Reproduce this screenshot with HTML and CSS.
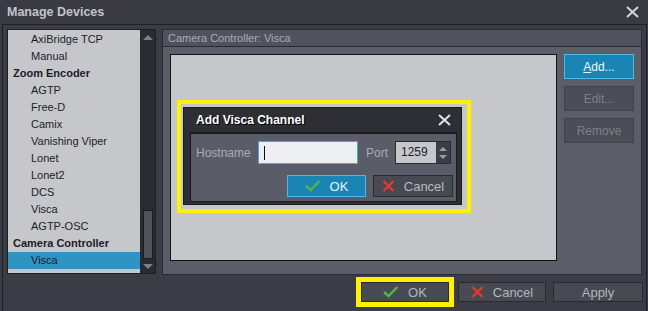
FILE: index.html
```html
<!DOCTYPE html>
<html lang="en">
<head>
    <meta charset="UTF-8">
    <title>Manage Devices</title>
    <link rel="stylesheet" href="styles.css">
</head>
<body>
    <div class="titlebar">
        <span class="title">Manage Devices</span>
        <svg class="close" width="13" height="12" viewBox="0 0 13 12">
            <path d="M1 1 L12 11 M12 1 L1 11" stroke="#d4d5d9" stroke-width="2"/>
        </svg>
    </div>

    <div class="frame">
        <div class="main">
            <div class="devlist">
                <ul class="items">
                    <li class="item">AxiBridge TCP</li>
                    <li class="item">Manual</li>
                    <li class="cat">Zoom Encoder</li>
                    <li class="item">AGTP</li>
                    <li class="item">Free-D</li>
                    <li class="item">Camix</li>
                    <li class="item">Vanishing Viper</li>
                    <li class="item">Lonet</li>
                    <li class="item">Lonet2</li>
                    <li class="item">DCS</li>
                    <li class="item">Visca</li>
                    <li class="item">AGTP-OSC</li>
                    <li class="cat">Camera Controller</li>
                    <li class="item selected">Visca</li>
                </ul>
                <div class="scrollbar">
                    <span class="arrow up"></span>
                    <div class="track"><div class="thumb"></div></div>
                    <span class="arrow down"></span>
                </div>
            </div>

            <div class="group">
                <div class="group-head">Camera Controller: Visca</div>
                <div class="group-body">
                    <div class="canvas">
                        <div class="highlight">
                            <div class="dialog">
                                <div class="dialog-head">
                                    <span>Add Visca Channel</span>
                                    <svg width="13" height="12" viewBox="0 0 13 12">
                                        <path d="M1 1 L12 11 M12 1 L1 11" stroke="#e2e3e6" stroke-width="2"/>
                                    </svg>
                                </div>
                                <div class="dialog-body">
                                    <div class="row">
                                        <span class="label">Hostname</span>
                                        <div class="input"><span class="caret"></span></div>
                                        <span class="label port">Port</span>
                                        <div class="spin">
                                            <span class="spin-value">1259</span>
                                            <span class="spin-btns">
                                                <svg width="10" height="16" viewBox="0 0 10 16">
                                                    <path d="M1 6 L5 2 L9 6 Z M1 10 L5 14 L9 10 Z" fill="#9a9da5"/>
                                                </svg>
                                            </span>
                                        </div>
                                    </div>
                                    <div class="row actions">
                                        <button class="btn blue">
                                            <svg class="ico" width="16" height="12" viewBox="0 0 16 12">
                                                <path d="M1 6 L5.5 10 L14.5 1" fill="none" stroke="#4fb548" stroke-width="2.4"/>
                                            </svg>OK</button>
                                        <button class="btn dark">
                                            <svg class="ico" width="13" height="12" viewBox="0 0 13 12">
                                                <path d="M1.5 1 L11.5 11 M11.5 1 L1.5 11" stroke="#e8372c" stroke-width="2.4"/>
                                            </svg>Cancel</button>
                                    </div>
                                </div>
                            </div>
                        </div>
                    </div>
                    <div class="side">
                        <button class="sbtn blue"><u>A</u>dd...</button>
                        <button class="sbtn off">Edit...</button>
                        <button class="sbtn off">Remove</button>
                    </div>
                </div>
            </div>
        </div>

        <div class="footer">
            <button class="fbtn marked">
                <svg class="ico" width="16" height="12" viewBox="0 0 16 12">
                    <path d="M1 6 L5.5 10 L14.5 1" fill="none" stroke="#4fb548" stroke-width="2.4"/>
                </svg>OK</button>
            <button class="fbtn cancel">
                <svg class="ico" width="13" height="12" viewBox="0 0 13 12">
                    <path d="M1.5 1 L11.5 11 M11.5 1 L1.5 11" stroke="#e8372c" stroke-width="2.4"/>
                </svg>Cancel</button>
            <button class="fbtn apply">Apply</button>
        </div>
    </div>
</body>
</html>
```

FILE: styles.css
```css
body {
    margin: 0;
    width: 648px;
    height: 311px;
    overflow: hidden;
    background: #3b3c45;
    font-family: 'Liberation Sans', Arial, sans-serif;
    font-size: 11px;
    color: #b3b6bd;
}

button {
    font-family: inherit;
    font-size: 12px;
    cursor: pointer;
}

.titlebar {
    height: 24px;
    display: flex;
    align-items: center;
    justify-content: space-between;
    padding: 0 9px 0 7px;
    background: #393a42;
}

.title {
    font-size: 12.5px;
    font-weight: bold;
    color: #c2c4ca;
}

.close {
    margin-top: -1px;
}

.frame {
    height: 286px;
    margin: 0 1px 0 2px;
    border: 1px solid #1f2025;
    border-bottom: none;
}

.main {
    display: flex;
    gap: 6px;
    padding: 4px 4px 0 4px;
}

/* device list */
.devlist {
    width: 147px;
    height: 243px;
    display: flex;
    border: 1px solid #1e1f24;
    background: #c6c7cb;
}

.items {
    flex: 1;
    list-style: none;
    margin: 0;
    padding: 1px 0 0;
    color: #1d1b2b;
}

.items li {
    height: 17px;
    line-height: 17px;
    white-space: nowrap;
}

.items .cat {
    padding-left: 5px;
    font-weight: bold;
}

.items .item {
    padding-left: 23px;
}

.items .selected {
    background: #3094c3;
}

.scrollbar {
    width: 15px;
    display: flex;
    flex-direction: column;
    align-items: center;
    background: #2a2b30;
}

.arrow {
    width: 0;
    height: 0;
    border-left: 5px solid transparent;
    border-right: 5px solid transparent;
}

.arrow.up {
    margin: 5px 0 6px;
    border-bottom: 5px solid #7c7f88;
}

.arrow.down {
    margin: 5px 0 4px;
    border-top: 5px solid #7c7f88;
}

.track {
    flex: 1;
    display: flex;
    align-items: flex-end;
}

.thumb {
    width: 8px;
    height: 47px;
    background: #50535c;
    border: 1px solid #1b1c20;
}

/* right group */
.group {
    width: 478px;
    height: 244px;
    display: flex;
    flex-direction: column;
    border: 1px solid #2b2c31;
}

.group-head {
    height: 16px;
    line-height: 16px;
    padding-left: 5px;
    background: #50535d;
    color: #a9acb4;
    border-bottom: 1px solid #2b2c31;
}

.group-body {
    flex: 1;
    display: flex;
    gap: 7px;
    padding: 7px 7px 13px 7px;
    background: #5b5e69;
}

.canvas {
    position: relative;
    flex: 1;
    background: #c6c7cb;
    border: 1px solid #121216;
}

.highlight {
    position: absolute;
    left: 6px;
    top: 45px;
    border: 4px solid #fff200;
    padding: 3px 5px 4px 2px;
}

.dialog {
    width: 277px;
    background: #2e2f35;
    border: 1px solid #1a1b1f;
}

.dialog-head {
    height: 23px;
    display: flex;
    align-items: center;
    justify-content: space-between;
    padding: 0 10px 0 12px;
    font-size: 12px;
    font-weight: bold;
    color: #ffffff;
    text-shadow: 1px 1px 0 #000;
}

.dialog-body {
    margin: 1px 4px 2px 6px;
    padding: 7px 3px 4px 5px;
    background: #5a5d68;
    border: 1px solid #1a1b1f;
    border-top-width: 2px;
}

.row {
    display: flex;
    align-items: center;
}

.label {
    width: 62px;
    color: #a9acb4;
    font-size: 12px;
}

.label.port {
    width: 29px;
    margin-left: 8px;
}

.input {
    width: 98px;
    height: 21px;
    background: #eeeff2;
    border: 1px solid #42ace0;
    display: flex;
    align-items: center;
}

.caret {
    width: 1px;
    height: 14px;
    margin-left: 5px;
    background: #111;
}

.spin {
    display: flex;
    height: 23px;
    border: 1px solid #2b2c31;
    box-sizing: border-box;
}

.spin-value {
    width: 40px;
    line-height: 21px;
    padding-left: 5px;
    box-sizing: border-box;
    background: #c6c7cb;
    color: #1d1b2b;
    font-size: 12px;
}

.spin-btns {
    width: 14px;
    display: flex;
    align-items: center;
    justify-content: center;
    background: #3b3c45;
}

.actions {
    justify-content: flex-end;
    gap: 7px;
    margin-top: 11px;
}

.btn {
    height: 22px;
    display: flex;
    align-items: center;
    justify-content: center;
    padding: 0;
    font-size: 13px;
}

.btn.blue {
    width: 79px;
    background: #1a85b5;
    border: 1px solid #4fb8e6;
    color: #e8f3f9;
}

.btn.dark {
    width: 80px;
    background: #474a53;
    border: 1px solid #2a2b30;
    color: #b8bbc2;
}

.ico {
    margin-right: 9px;
}

/* side buttons */
.side {
    width: 70px;
    display: flex;
    flex-direction: column;
    gap: 7px;
}

.sbtn {
    height: 25px;
    font-size: 12px;
    border: 1px solid #41434c;
    background: #4b4d57;
    color: #7e8189;
}

.sbtn.blue {
    background: #1a85b5;
    border-color: #4fb8e6;
    color: #eef6fa;
}

/* footer */
.footer {
    display: flex;
    justify-content: flex-end;
    padding: 7px 3px 0 0;
}

.fbtn {
    width: 88px;
    height: 20px;
    display: flex;
    align-items: center;
    justify-content: center;
    padding: 0;
    background: #474a53;
    border: 1px solid #2a2b30;
    color: #b3b6bd;
    font-size: 13px;
}

.fbtn.marked {
    outline: 5px solid #fff200;
}

.fbtn.cancel {
    margin-left: 9px;
}

.fbtn.apply {
    width: 90px;
    margin-left: 7px;
}
```
